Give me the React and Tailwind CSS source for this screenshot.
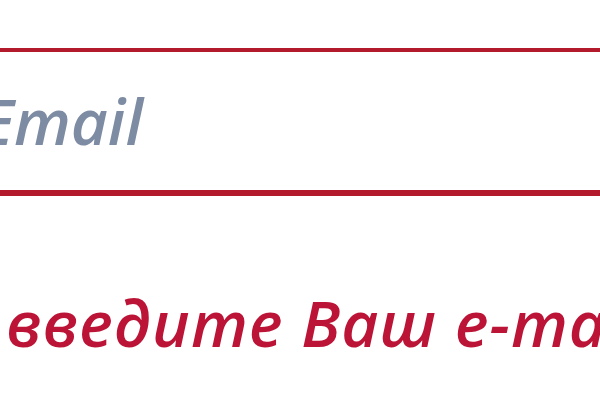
// EmailField
import React from 'react';

export default function App() {
  return (
    <div className="w-[600px] h-[400px] overflow-hidden bg-white" style={{ fontFamily: '"Open Sans", "Liberation Sans", sans-serif' }}>
      <div className="mt-[48px] h-[148px] border-t-[4px] border-b-[6px] border-[#b31b2c] pt-[37px]">
        <div className="-ml-[20px] text-[64px] leading-none italic font-semibold text-[#7d8ca3]">Email</div>
      </div>
      <div className="mt-[95px] pl-[6px] text-[64px] leading-none italic font-semibold tracking-[1px] whitespace-nowrap text-[#bc1436]">
        введите Ваш e-mail
      </div>
    </div>
  );
}
